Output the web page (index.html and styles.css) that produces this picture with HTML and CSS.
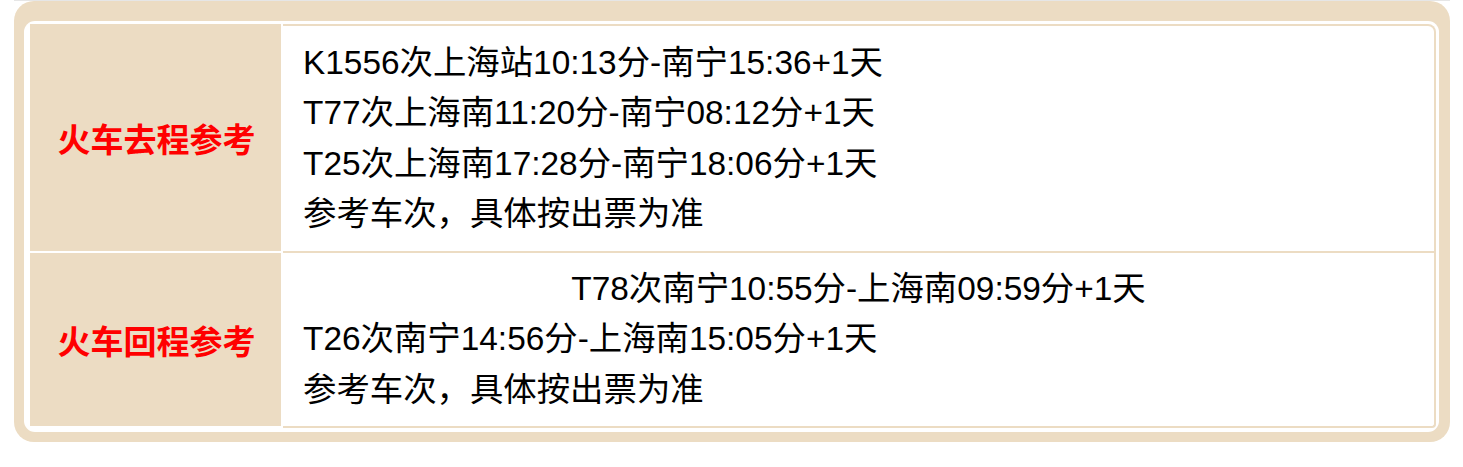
FILE: index.html
```html
<!DOCTYPE html>
<html lang="zh-CN">
<head>
<meta charset="utf-8">
<title>火车参考</title>
<link rel="stylesheet" href="styles.css">
</head>
<body>
<div class="topline"></div>
<div class="frame">
  <div class="inner">
    <div class="panel">
      <div class="label row1">火车去程参考</div>
      <div class="info row1">
        <div class="line">K1556次上海站10:13分-南宁15:36+1天</div>
        <div class="line">T77次上海南11:20分-南宁08:12分+1天</div>
        <div class="line">T25次上海南17:28分-南宁18:06分+1天</div>
        <div class="line">参考车次，具体按出票为准</div>
      </div>
      <div class="label row2">火车回程参考</div>
      <div class="info row2">
        <div class="line center">T78次南宁10:55分-上海南09:59分+1天</div>
        <div class="line">T26次南宁14:56分-上海南15:05分+1天</div>
        <div class="line">参考车次，具体按出票为准</div>
      </div>
    </div>
  </div>
</div>
</body>
</html>
```

FILE: styles.css
```css
html, body {
  margin: 0;
  padding: 0;
  background: #ffffff;
}

body {
  font-family: "Liberation Sans", "Noto Sans CJK SC", sans-serif;
  color: #000000;
}

.topline {
  height: 1px;
  margin: 0 13px 0 14px;
  background: #e6e6e6;
}

.frame {
  width: 1436px;
  margin-left: 14px;
  box-sizing: border-box;
  padding: 20px 11px 10px 10px;
  background: #ecdcc3;
  border-radius: 20px;
}

.inner {
  background: #ffffff;
  border-radius: 11px;
  padding: 3px 3px 4px 6px;
}

.panel {
  display: grid;
  grid-template-columns: 253px 1fr;
  grid-template-rows: 229px 175px;
}

.label {
  display: flex;
  align-items: center;
  justify-content: center;
  padding-left: 2px;
  background: #ecdcc3;
  border-right: 2px solid #ffffff;
  border-bottom: 2px solid #ffffff;
  color: #ff0000;
  font-weight: bold;
  font-size: 33px;
}

.info {
  display: flex;
  flex-direction: column;
  justify-content: center;
  padding: 0 20px 0 20px;
  font-size: 33.4px;
  border-right: 2px solid #ecdcc3;
  border-bottom: 2px solid #ecdcc3;
}

.info.row1 {
  border-top: 2px solid #ecdcc3;
  border-top-right-radius: 8px;
}

.info.row2 {
  border-bottom-right-radius: 4px;
}

.line {
  line-height: 50.5px;
  white-space: nowrap;
}

.line.center {
  text-align: center;
}
```
